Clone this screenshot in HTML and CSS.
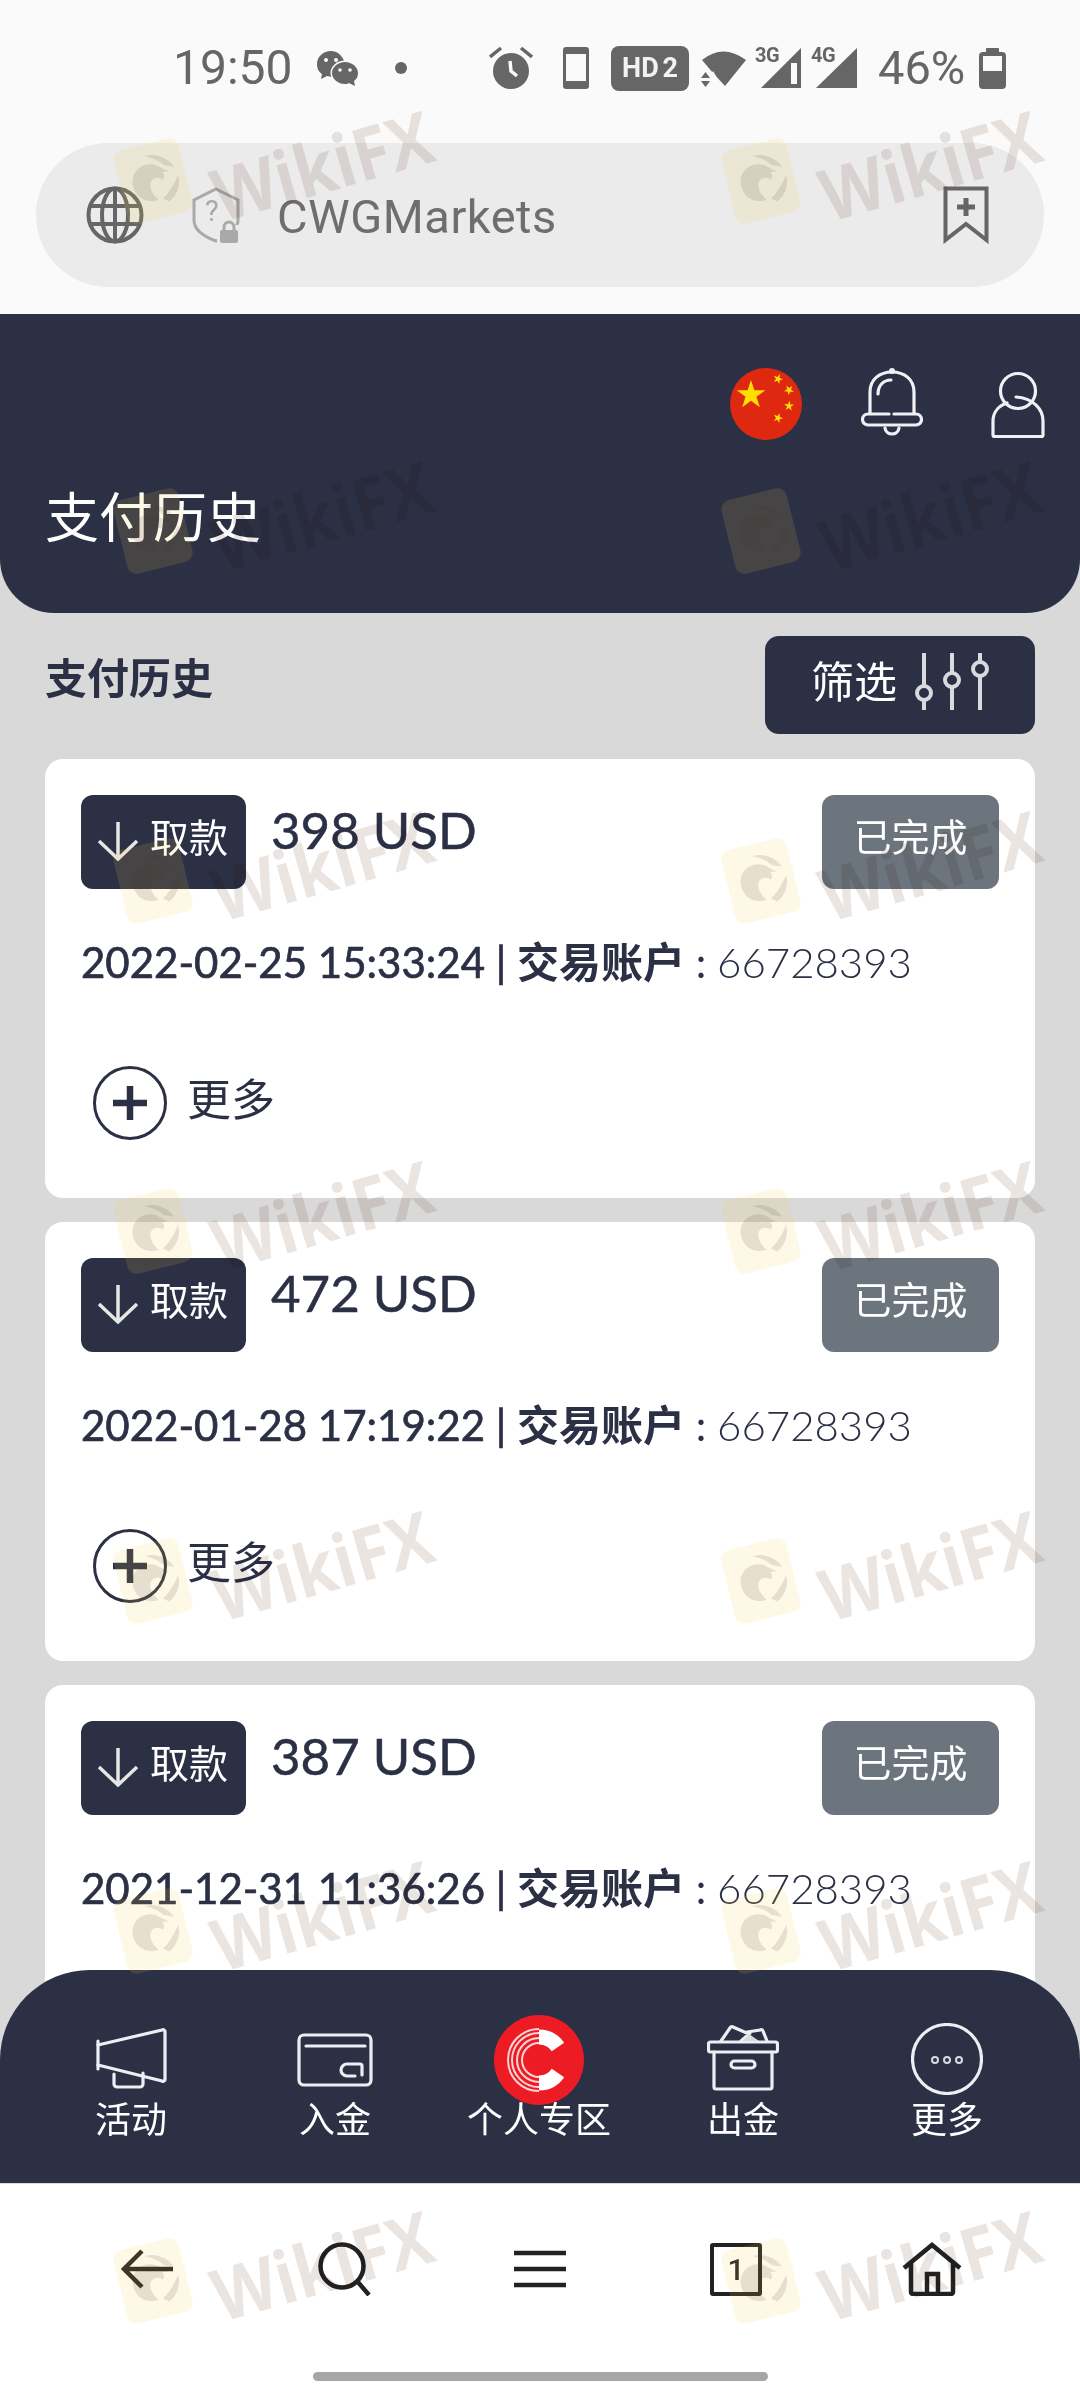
FILE: index.html
```html
<!DOCTYPE html>
<html lang="zh">
<head>
<meta charset="utf-8">
<title>支付历史</title>
<link rel="stylesheet" href="styles.css">
</head>
<body>
<svg class="defs" width="0" height="0" aria-hidden="true">
  <defs>
    <path id="star" d="M0-1 .225-.309H.951L.363.118.588.809 0 .382-.588.809-.363.118-.951-.309H-.225Z"/>
    <symbol id="wm-logo" viewBox="0 0 64 72">
      <rect x="1" y="1" width="62" height="70" rx="9" class="wm-tile"/>
      <path class="wm-mark" d="M16 47C9 34 15 22 27 20 33 19 39 22 42 26L48 31 42 30C44 33 43 36 41 37 38 33 33 33 30 36 27 40 28 48 33 54 26 55 20 52 16 47Z"/>
      <path class="wm-mark" d="M30 12A24 24 0 0 1 54 28L45 24C41 18 36 15 30 12ZM56 36A24 24 0 0 1 42 58L37 54C44 50 50 44 56 36Z"/>
    </symbol>
    <symbol id="i-arrow" viewBox="0 0 42 40"><path class="ic-tag" d="M21 1V38M2 20 21 38 40 20"/></symbol>
    <symbol id="i-plus" viewBox="0 0 76 76">
      <circle cx="38" cy="38" r="35.5" class="ic-ring"/>
      <path class="ic-plus" d="M38 21V55M21 38H55"/>
    </symbol>
  </defs>
</svg>

<div class="page">
  <header class="chrome">
    <div class="status">
      <span class="time">19:50</span>
      <svg class="s-wechat" viewBox="0 0 42 36"><path class="fill" d="M14 1C6 1 0 7 0 14c0 5 2 8 5 10l-1 5 6-3c2 0 3 1 5 1 5 0 10-3 12-7 2-3 1-7 0-9C25 5 20 1 14 1Z"/><ellipse cx="28" cy="23" rx="14.500" ry="12.500" class="gap"/><path class="fill" d="M28 12c-7 0-13 5-13 11s6 11 13 11c1 0 3 0 4-1l6 3-1-5c3-2 4-5 4-8 0-6-6-11-13-11Z"/><circle cx="9" cy="10" r="2" class="eye"/><circle cx="19" cy="10" r="2" class="eye"/><circle cx="23" cy="20" r="1.800" class="eye"/><circle cx="33" cy="20" r="1.800" class="eye"/></svg>
      <span class="s-dot"></span>
      <svg class="s-alarm" viewBox="0 0 44 44"><circle cx="22" cy="25" r="18" class="fill"/><path class="alarm-ear" d="M1 11 12 2M43 11 32 2"/><path class="alarm-hand" d="M21 15 22 25 28 30"/></svg>
      <svg class="s-phone" viewBox="0 0 26 42"><rect width="26" height="42" rx="3" class="fill"/><rect x="3" y="7" width="20" height="27" class="eye"/></svg>
      <span class="s-hd">HD 2</span>
      <svg class="s-wifi" viewBox="0 0 46 38"><path class="fill" d="M1 11Q22-6 45 11L24 37 12 24Z"/><path class="fill" d="M0 29 4.500 23 9 29ZM0 32H9L4.500 38Z"/><path class="gap-line" d="M11 23 17 34"/></svg>
      <span class="s-sig">
        <svg viewBox="0 0 44 42"><path class="fill" d="M4 41 44 1V41Z"/><rect x="34" y="16" width="6" height="21" class="eye"/></svg>
        <span class="s-net">3G</span>
      </span>
      <span class="s-sig s-sig4">
        <svg viewBox="0 0 44 42"><path class="fill" d="M3 41 44 1V41Z"/></svg>
        <span class="s-net">4G</span>
      </span>
      <span class="s-pct">46%</span>
      <svg class="s-batt" viewBox="0 0 27 41"><rect x="7" width="13" height="6" rx="1" class="fill"/><rect y="4" width="27" height="37" rx="4" class="fill"/><rect x="4" y="8" width="19" height="15" class="eye"/></svg>
    </div>
    <div class="address">
      <svg class="a-globe" viewBox="0 0 58 58"><g class="ic-grey"><circle cx="29" cy="29" r="26.500"/><ellipse cx="29" cy="29" rx="13" ry="26.500"/><path d="M29 3V55M5 20H53M5 38H53"/></g></svg>
      <span class="a-shield">
        <svg viewBox="0 0 50 56"><path class="ic-shield" d="M25 2 47 13V33C47 44 36 50 25 54 14 50 3 44 3 33V13Z"/><rect x="26" y="38" width="24" height="18" class="patch"/><path class="ic-lock" d="M33 43V40a5 5 0 0 1 10 0V43"/><rect x="29" y="43" width="18" height="13" rx="2" class="lock-body"/></svg>
        <span class="a-q">?</span>
      </span>
      <span class="a-name">CWGMarkets</span>
      <svg class="a-mark" viewBox="0 0 46 58"><path class="ic-grey" d="M2.500 2.500H43.500V54L23 38 2.500 54Z"/><path class="ic-bm" d="M23 12V30M14 21H32"/></svg>
    </div>
  </header>

  <main class="main">
    <section class="hero">
      <div class="hero-icons">
        <svg class="flag" viewBox="0 0 72 72">
          <circle cx="36" cy="36" r="36" class="flag-red"/>
          <use href="#star" transform="translate(21 27) scale(15)" class="flag-star"/>
          <use href="#star" transform="translate(48 11) rotate(20) scale(5.200)" class="flag-star"/>
          <use href="#star" transform="translate(59 22) rotate(40) scale(5.200)" class="flag-star"/>
          <use href="#star" transform="translate(59 38) rotate(5) scale(5.200)" class="flag-star"/>
          <use href="#star" transform="translate(48 50) rotate(20) scale(5.200)" class="flag-star"/>
        </svg>
        <svg class="bell" viewBox="0 0 62 69"><g class="ic-light"><path d="M9 45V24C9 11 19 4 31 4s22 7 22 20V45"/><path d="M17 26C17 18 22 12 30 12"/><path d="M28 46H7a5.500 5.500 0 0 0 0 11H55a5.500 5.500 0 0 0 0-11H33"/><path d="M24 60c1 8 13 8 14 0"/></g><circle cx="31" cy="3" r="3" class="bell-knob"/></svg>
        <svg class="user" viewBox="0 0 54 68"><g class="ic-light"><circle cx="27" cy="20" r="17.500"/><path d="M25 26C42 27 52 38 52 50V64a1.500 1.500 0 0 1-1.500 1.500H3.500A1.500 1.500 0 0 1 2 64V50C2 42 7 35 16 32"/></g></svg>
      </div>
      <h1 class="hero-title">支付历史</h1>
    </section>

    <div class="list-head">
      <h2 class="list-title">支付历史</h2>
      <button class="filter">
        <span class="filter-label">筛选</span>
        <svg class="sliders" viewBox="0 0 78 60"><g class="ic-slide"><path d="M12 2V35M12 49V59M40 2V22M40 36V59M68 2V11M68 25V59"/><circle cx="12" cy="42" r="7"/><circle cx="40" cy="29" r="7"/><circle cx="68" cy="18" r="7"/></g></svg>
      </button>
    </div>

    <article class="card">
      <div class="card-top">
        <span class="tag"><svg class="tag-arrow"><use href="#i-arrow"/></svg><span class="tag-label">取款</span></span>
        <span class="amount">398 USD</span>
        <span class="done">已完成</span>
      </div>
      <p class="meta"><span class="meta-date">2022-02-25 15:33:24 | </span><span class="meta-strong">交易账户</span> : <span class="meta-num">66728393</span></p>
      <div class="more"><svg class="more-plus"><use href="#i-plus"/></svg><span>更多</span></div>
    </article>

    <article class="card">
      <div class="card-top">
        <span class="tag"><svg class="tag-arrow"><use href="#i-arrow"/></svg><span class="tag-label">取款</span></span>
        <span class="amount">472 USD</span>
        <span class="done">已完成</span>
      </div>
      <p class="meta"><span class="meta-date">2022-01-28 17:19:22 | </span><span class="meta-strong">交易账户</span> : <span class="meta-num">66728393</span></p>
      <div class="more"><svg class="more-plus"><use href="#i-plus"/></svg><span>更多</span></div>
    </article>

    <article class="card">
      <div class="card-top">
        <span class="tag"><svg class="tag-arrow"><use href="#i-arrow"/></svg><span class="tag-label">取款</span></span>
        <span class="amount">387 USD</span>
        <span class="done">已完成</span>
      </div>
      <p class="meta"><span class="meta-date">2021-12-31 11:36:26 | </span><span class="meta-strong">交易账户</span> : <span class="meta-num">66728393</span></p>
      <div class="more"><svg class="more-plus"><use href="#i-plus"/></svg><span>更多</span></div>
    </article>

    <nav class="tabs">
      <a class="tab">
        <svg class="t-icon t-mega" viewBox="0 0 72 62"><g class="ic-nav"><path d="M3 13V41"/><path d="M3 17 67 2a2 2 0 0 1 3 2V51a2 2 0 0 1-3 2L3 37"/><path d="M19 46V56a3 3 0 0 0 3 3H45a3 3 0 0 0 3-3V45"/></g></svg>
        <span>活动</span>
      </a>
      <a class="tab">
        <svg class="t-icon t-wallet" viewBox="0 0 76 54"><g class="ic-nav"><rect x="2" y="2" width="72" height="50" rx="5"/><path d="M9 13H68"/><path d="M65 42V33a2 2 0 0 0-2-2H50a6 6 0 0 0 0 12H58"/></g></svg>
        <span>入金</span>
      </a>
      <a class="tab">
        <svg class="t-icon t-logo" viewBox="0 0 90 90">
          <circle cx="45" cy="45" r="45" class="logo-red"/>
          <path class="logo-thick" d="M45 22A23 23 0 0 1 64 32M64 58A23 23 0 0 1 45 68"/>
          <path class="logo-thin" d="M45 28A17 17 0 0 0 45 62M45 23A22 22 0 0 0 45 67M45 18A27 27 0 0 0 45 72M45 14A31 31 0 0 0 45 76"/>
        </svg>
        <span>个人专区</span>
      </a>
      <a class="tab">
        <svg class="t-icon t-box" viewBox="0 0 72 66"><g class="ic-nav"><rect x="1.500" y="17" width="69" height="10" rx="2"/><path d="M7 27V62a2 2 0 0 0 2 2H63a2 2 0 0 0 2-2V27"/><rect x="24" y="36" width="24" height="7" rx="3.500"/><path d="M14 16 23 3a2 2 0 0 1 3-1L42 9 34 16M40 7 53 5a2 2 0 0 1 3 1L60 16"/></g><path class="box-fill" d="M36 16 42 9 52 16Z"/></svg>
        <span>出金</span>
      </a>
      <a class="tab">
        <svg class="t-icon t-more" viewBox="0 0 72 72"><g class="ic-nav"><circle cx="36" cy="36" r="34.500"/></g><g class="ic-dots"><circle cx="24" cy="37" r="3"/><circle cx="36" cy="37" r="3"/><circle cx="48" cy="37" r="3"/></g></svg>
        <span>更多</span>
      </a>
    </nav>
  </main>

  <footer class="toolbar">
    <div class="tools">
      <svg class="b-back" viewBox="0 0 54 40"><path class="ic-tool" d="M21 2 3 20 21 38M3 20H52"/></svg>
      <svg class="b-search" viewBox="0 0 54 54"><circle cx="25" cy="24" r="21.500" class="ic-tool"/><path class="ic-tool" d="M40 39 52 53"/></svg>
      <svg class="b-menu" viewBox="0 0 52 38"><path class="ic-tool" d="M0 3H52M0 19H52M0 35H52"/></svg>
      <span class="b-tab">1</span>
      <svg class="b-home" viewBox="0 0 60 54"><path class="ic-tool" d="M2 26 30 3 58 26M9 21V50a2 2 0 0 0 2 2H49a2 2 0 0 0 2-2V21"/><path class="ic-tool" d="M25 51V32H36V51"/></svg>
    </div>
    <div class="home-bar"></div>
  </footer>

  <div class="watermarks" aria-hidden="true">
    <div class="wm"><svg class="wm-logo"><use href="#wm-logo"/></svg><span class="wm-text">WikiFX</span></div>
    <div class="wm"><svg class="wm-logo"><use href="#wm-logo"/></svg><span class="wm-text">WikiFX</span></div>
    <div class="wm"><svg class="wm-logo"><use href="#wm-logo"/></svg><span class="wm-text">WikiFX</span></div>
    <div class="wm"><svg class="wm-logo"><use href="#wm-logo"/></svg><span class="wm-text">WikiFX</span></div>
    <div class="wm"><svg class="wm-logo"><use href="#wm-logo"/></svg><span class="wm-text">WikiFX</span></div>
    <div class="wm"><svg class="wm-logo"><use href="#wm-logo"/></svg><span class="wm-text">WikiFX</span></div>
    <div class="wm"><svg class="wm-logo"><use href="#wm-logo"/></svg><span class="wm-text">WikiFX</span></div>
    <div class="wm"><svg class="wm-logo"><use href="#wm-logo"/></svg><span class="wm-text">WikiFX</span></div>
    <div class="wm"><svg class="wm-logo"><use href="#wm-logo"/></svg><span class="wm-text">WikiFX</span></div>
    <div class="wm"><svg class="wm-logo"><use href="#wm-logo"/></svg><span class="wm-text">WikiFX</span></div>
    <div class="wm"><svg class="wm-logo"><use href="#wm-logo"/></svg><span class="wm-text">WikiFX</span></div>
    <div class="wm"><svg class="wm-logo"><use href="#wm-logo"/></svg><span class="wm-text">WikiFX</span></div>
    <div class="wm"><svg class="wm-logo"><use href="#wm-logo"/></svg><span class="wm-text">WikiFX</span></div>
    <div class="wm"><svg class="wm-logo"><use href="#wm-logo"/></svg><span class="wm-text">WikiFX</span></div>
  </div>
</div>
</body>
</html>
```

FILE: styles.css
```css
* { box-sizing: border-box; }
html, body { margin: 0; padding: 0; }
body { width: 1080px; height: 2400px; overflow: hidden; background: #fff; font-family: Lato, "Noto Sans CJK SC", sans-serif; color: #2c3045; }
h1, h2, p { margin: 0; font-weight: inherit; font-size: inherit; }
a { display: block; }
svg { display: block; flex: none; }
.defs { position: absolute; }
.page { position: relative; width: 1080px; height: 2400px; overflow: hidden; }

/* Android + browser chrome */
.chrome { height: 314px; background: #fafafa; padding-top: 45px; }
.status { display: flex; align-items: center; height: 46px; padding-left: 173px; color: #666; font-family: Roboto, sans-serif; }
.fill { fill: #666; }
.eye { fill: #fafafa; }
.gap { fill: #fafafa; }
.gap-line { stroke: #fafafa; stroke-width: 3; fill: none; }
.time { font-size: 48px; line-height: 46px; width: 119px; }
.s-wechat { width: 42px; height: 36px; margin-left: 25px; }
.s-dot { width: 12px; height: 12px; border-radius: 50%; background: #666; margin-left: 36px; }
.s-alarm { width: 44px; height: 44px; margin-left: 82px; }
.alarm-ear { stroke: #666; stroke-width: 3.500; fill: none; }
.alarm-hand { stroke: #fafafa; stroke-width: 3.500; fill: none; }
.s-phone { width: 26px; height: 42px; margin-left: 30px; }
.s-hd { width: 78px; height: 45px; margin-left: 22px; background: #666; color: #f2f2f2; border-radius: 8px; font-size: 27px; font-weight: 700; line-height: 45px; text-align: center; word-spacing: -3px; }
.s-wifi { width: 46px; height: 38px; margin-left: 12px; }
.s-sig { position: relative; display: block; width: 44px; height: 42px; margin-left: 10px; }
.s-sig svg { width: 44px; height: 42px; }
.s-sig4 { margin-left: 12px; }
.s-net { position: absolute; left: -2px; top: -2px; font-size: 20px; line-height: 20px; font-weight: 700; color: #666; letter-spacing: -.5px; }
.s-pct { font-size: 47px; line-height: 46px; width: 90px; margin-left: 21px; }
.s-batt { width: 27px; height: 41px; margin-left: 11px; }

.address { display: flex; align-items: center; height: 144px; margin: 52px 36px 0; padding-left: 50px; background: #ebebeb; border-radius: 72px; }
.a-globe { width: 58px; height: 58px; }
.ic-grey, .ic-grey * { fill: none; stroke: #666; stroke-width: 4; }
.a-shield { position: relative; display: block; width: 50px; height: 56px; margin-left: 47px; }
.a-shield svg { width: 50px; height: 56px; }
.ic-shield { fill: none; stroke: #a9a9a9; stroke-width: 3; }
.patch { fill: #ebebeb; }
.ic-lock { fill: none; stroke: #a9a9a9; stroke-width: 3; }
.lock-body { fill: #a9a9a9; }
.a-q { position: absolute; left: 14px; top: 8px; font: 400 29px/32px Roboto, sans-serif; color: #a9a9a9; }
.a-name { margin: 3px 0 0 36px; font: 400 47px/56px Roboto, sans-serif; color: #6e6e6e; letter-spacing: .5px; }
.a-mark { width: 46px; height: 58px; margin-left: auto; margin-right: 55px; }
.ic-bm { fill: none; stroke: #666; stroke-width: 5; }

/* Main */
.main { position: relative; height: 1869px; overflow: hidden; background: #d9d9d9; }
.hero { height: 299px; background: #2c3045; border-radius: 0 0 54px 54px; padding: 54px 35px 0 45px; color: #fff; }
.hero-icons { display: flex; justify-content: flex-end; align-items: flex-start; }
.flag { width: 72px; height: 72px; }
.flag-red { fill: #de2910; }
.flag-star { fill: #ffde00; }
.bell { width: 62px; height: 69px; margin-left: 59px; }
.user { width: 54px; height: 68px; margin-left: 68px; margin-top: 3px; }
.ic-light, .ic-light * { fill: none; stroke: #eef0f3; stroke-width: 3.200; stroke-linecap: round; }
.bell-knob { fill: #eef0f3; }
.hero-title { margin-top: 39px; font: 400 54px/72px "Noto Sans CJK SC", sans-serif; }

.list-head { display: flex; justify-content: space-between; align-items: flex-start; padding: 23px 45px 0 45px; height: 146px; }
.list-title { margin-top: 11px; font: 700 42px/58px "Noto Sans CJK SC", sans-serif; color: #2c3045; }
.filter { display: flex; align-items: center; width: 270px; height: 98px; padding: 0 0 0 46px; border: 0; border-radius: 14px; background: #2c3045; color: #fff; font: 400 43px/60px "Noto Sans CJK SC", sans-serif; }
.filter-label { margin-top: -12px; }
.sliders { width: 78px; height: 60px; margin-left: 15px; margin-top: -8px; }
.ic-slide, .ic-slide * { fill: none; stroke: #d9dade; stroke-width: 4; }

.card { height: 439px; margin: 0 45px 24px; padding: 36px; background: #fff; border-radius: 18px; }
.card-top { display: flex; align-items: flex-start; height: 94px; }
.tag { display: flex; align-items: center; width: 165px; height: 94px; padding-left: 16px; background: #2c3045; color: #fff; border-radius: 12px; font: 400 39px/94px "Noto Sans CJK SC", sans-serif; }
.tag-label { margin-top: -14px; }
.tag-arrow { width: 42px; height: 40px; margin: -2px 11px 0 0; }
.ic-tag { fill: none; stroke: #e6e6e6; stroke-width: 3.500; }
.amount { margin-left: 25px; font-size: 51px; line-height: 70px; font-weight: 400; -webkit-text-stroke: .5px #2c3045; color: #2c3045; }
.done { width: 177px; height: 94px; margin-left: auto; background: #6c757d; color: #fff; border-radius: 12px; font: 400 38px/80px "Noto Sans CJK SC", sans-serif; text-align: center; }
.meta { margin-top: 45px; font-size: 42px; line-height: 56px; white-space: nowrap; color: #2c3045; }
.meta-date { font-weight: 400; -webkit-text-stroke: .7px #2c3045; }
.meta-strong { font-weight: 700; }
.meta-num { font-weight: 300; }
.more { display: flex; align-items: flex-start; margin-top: 69px; padding-left: 11px; font: 400 44px/76px "Noto Sans CJK SC", sans-serif; }
.more-plus { width: 76px; height: 76px; margin: 6px 19px 0 0; }
.ic-ring { fill: none; stroke: #2c3045; stroke-width: 3; }
.ic-plus { fill: none; stroke: #2c3045; stroke-width: 6.500; }

/* Bottom nav, overlapping the list */
.tabs { position: absolute; left: 0; right: 0; bottom: 0; height: 213px; display: grid; grid-template-columns: repeat(5, 204px); padding-left: 29px; background: #2c3045; border-radius: 90px 90px 0 0; }
.tab { position: relative; height: 213px; padding-top: 122px; text-align: center; color: #fff; font: 400 36px/50px "Noto Sans CJK SC", sans-serif; white-space: nowrap; }
.t-icon { position: absolute; left: 50%; transform: translateX(-50%); }
.t-mega { width: 72px; height: 62px; top: 58px; }
.t-wallet { width: 76px; height: 54px; top: 63px; }
.t-logo { width: 90px; height: 90px; top: 45px; }
.t-box { width: 72px; height: 66px; top: 55px; }
.t-more { width: 72px; height: 72px; top: 53px; }
.ic-nav, .ic-nav * { fill: none; stroke: #eceef2; stroke-width: 3.200; stroke-linecap: round; }
.ic-dots, .ic-dots * { fill: none; stroke: #d8dae0; stroke-width: 2; }
.box-fill { fill: #d8dae0; }
.logo-red { fill: #ed1c24; }
.logo-thick { fill: none; stroke: #fff; stroke-width: 15; }
.logo-thin { fill: none; stroke: #fbd6d7; stroke-width: 2; }

/* Browser toolbar */
.toolbar { height: 217px; background: #fff; border-top: 1px solid #dcdcdc; }
.tools { display: grid; grid-template-columns: repeat(5, 196px); justify-items: center; align-items: center; padding: 57px 0 0 50px; box-sizing: content-box; height: 56px; }
.ic-tool { fill: none; stroke: #222; stroke-width: 4.500; }
.b-back { width: 54px; height: 40px; }
.b-search { width: 54px; height: 54px; }
.b-menu { width: 52px; height: 38px; }
.b-tab { display: block; width: 52px; height: 53px; border: 4px solid #222; border-radius: 3px; text-align: center; color: #222; font: 500 30px/45px Roboto, sans-serif; }
.b-home { width: 60px; height: 54px; }
.home-bar { width: 455px; height: 9px; margin: 75px auto 0; background: #a6a6a6; border-radius: 5px; }

/* WikiFX watermark layer over the whole screenshot */
.watermarks { position: absolute; top: 95px; left: 93px; display: grid; grid-template-columns: 608px 380px; grid-auto-rows: 350px; pointer-events: none; }
.wm { display: flex; align-items: flex-start; height: 350px; }
.wm-logo { width: 72px; height: 78px; margin: 47px 0 0 24px; transform: rotate(-14deg); }
.wm-tile { fill: rgba(250, 205, 70, .13); }
.wm-mark { fill: rgba(70, 55, 50, .13); }
.wm-text { margin: 19px 0 0 20px; font: 700 66px/100px "Open Sans", sans-serif; color: #ebe5e2; mix-blend-mode: multiply; transform: rotate(-16deg) scaleY(1.1); }
```
